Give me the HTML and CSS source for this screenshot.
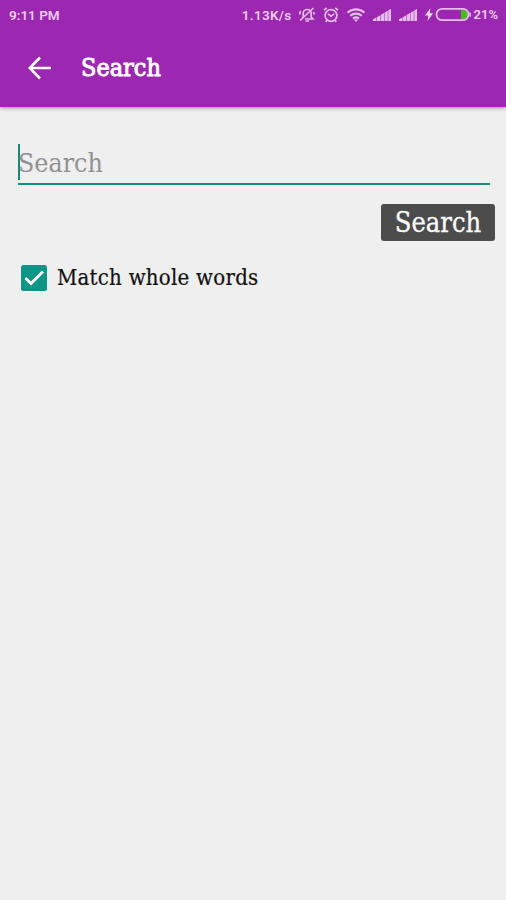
FILE: index.html
```html
<!DOCTYPE html>
<html lang="en">
<head>
  <meta charset="UTF-8" />
  <meta name="viewport" content="width=device-width, initial-scale=1.0"/>
  <title>Search</title>
  <link rel="stylesheet" href="styles.css">
</head>
<body>

  <header class="app-header">
    <div class="status-bar">
      <span class="clock">9:11 PM</span>
      <div class="status-icons">
        <span class="net-speed">1.13K/s</span>
        <!-- muted bell -->
        <svg class="icon-mute" width="18" height="18" viewBox="0 0 18 18">
          <path d="M4 12.5 5.2 11V7.500a4 4 0 0 1 8 0V11l1.700 2H7M7.500 15h3.500M2 14.500 15.500 2M2.500 5 1.600 8.500M15.500 6l.8 2.500"/>
        </svg>
        <!-- alarm clock -->
        <svg class="icon-alarm" width="18" height="18" viewBox="0 0 18 18">
          <circle cx="9" cy="9.500" r="5.900"/>
          <path d="M2 4.200 4.800 2M16 4.200 13.200 2M6 7.800 9 10.300 12 7.800M4.800 14.300 3.800 16M13.200 14.300l1 1.700"/>
        </svg>
        <!-- wifi -->
        <svg class="icon-wifi" width="20" height="16" viewBox="0 0 20 16">
          <path d="M1.500 5.700a12.600 12.600 0 0 1 17 0M4.300 8.800a8.700 8.700 0 0 1 11.400 0M7 11.600a4.800 4.800 0 0 1 6 0"/>
          <path class="dot" d="M7.800 12.600h4.400L10 15Z"/>
        </svg>
        <svg class="icon-signal" width="19" height="14" viewBox="0 0 19 14">
          <path class="wedge" d="M0 13V11.500L18 1V13Z"/>
          <path d="M0 13V11.500L3 9.800V13ZM4 13V9.200L7 7.400V13ZM8 13V6.800L11 5V13ZM12 13V4.500L14.500 3V13ZM15.500 13V2.200L18 1V13Z"/>
        </svg>
        <svg class="icon-signal" width="19" height="14" viewBox="0 0 19 14">
          <path class="wedge" d="M0 13V11.500L18 1V13Z"/>
          <path d="M0 13V11.500L3 9.800V13ZM4 13V9.200L7 7.400V13ZM8 13V6.800L11 5V13ZM12 13V4.500L14.500 3V13ZM15.500 13V2.200L18 1V13Z"/>
        </svg>
        <!-- charging battery -->
        <svg class="icon-battery" width="46" height="15" viewBox="0 0 46 15">
          <path class="bolt" d="M5.500 1 0 8.500H3.300L2.500 14 8 6.300H4.700Z"/>
          <path class="charge" d="M36 3h2.500a4.500 4.500 0 0 1 0 9H36Z"/>
          <rect class="shell" x="11.500" y="1.800" width="32" height="11.400" rx="5.700"/>
          <path class="tip" d="M45 5.500v4"/>
        </svg>
        <span class="battery-level">21%</span>
      </div>
    </div>
    <div class="toolbar">
      <svg class="back" width="24" height="24" viewBox="0 0 24 24">
        <path d="M23 12H2.500M12 1.500 1.800 12 12 22.500"/>
      </svg>
      <h1>Search</h1>
    </div>
  </header>

  <main class="search-form">
    <div class="search-field">
      <span class="caret"></span>
      <span class="placeholder">Search</span>
    </div>
    <button class="search-btn" type="button">Search</button>
    <label class="match-row">
      <svg class="checkbox" width="26" height="26" viewBox="0 0 26 26">
        <rect width="26" height="26" rx="2.500"/>
        <path d="M4.300 13 10 18.500 22 6.600"/>
      </svg>
      <span>Match whole words</span>
    </label>
  </main>

</body>
</html>
```
FILE: styles.css
```css
body {
  margin: 0;
  min-height: 900px;
  background: #efefef;
  font-family: "Roboto Slab", "DejaVu Serif Condensed", "DejaVu Serif", serif;
  font-stretch: condensed;
  color: #111;
}
svg {
  display: block;
  flex: none;
  fill: none;
}
.app-header {
  height: 107px;
  background: #9c27b0;
  box-shadow: 0 1px 4px rgba(0,0,0,0.4);
}
.status-bar {
  display: flex;
  justify-content: space-between;
  align-items: center;
  height: 29px;
  padding: 0 8px 0 9px;
  font-family: Roboto, sans-serif;
  font-stretch: normal;
  font-size: 13.5px;
  font-weight: 600;
  color: #efcdf4;
}
.status-icons {
  display: flex;
  align-items: center;
}
.status-icons svg {
  stroke: #e6bded;
  stroke-width: 1.7;
}
.net-speed {
  letter-spacing: 0.3px;
}
.icon-mute,
.icon-alarm,
.icon-wifi {
  margin-left: 6px;
}
.status-icons .icon-wifi {
  stroke-width: 2.1;
}
.icon-wifi .dot {
  fill: #e6bded;
  stroke: none;
}
.status-icons .icon-signal {
  margin-left: 7px;
  fill: #e6bded;
  stroke: none;
}
.icon-signal .wedge {
  fill-opacity: 0.5;
}
.icon-battery {
  margin-left: 7px;
}
.icon-battery .bolt {
  fill: #f4dcf7;
  stroke: none;
}
.icon-battery .charge {
  fill: #46bd1c;
  stroke: none;
}
.battery-level {
  margin-left: 3px;
  font-size: 13px;
}
.toolbar {
  display: flex;
  align-items: center;
  height: 77px;
  padding-left: 28px;
}
.back {
  stroke: #fff;
  stroke-width: 2.7;
}
.toolbar h1 {
  margin: 0 0 0 29px;
  font-size: 25px;
  line-height: 30px;
  font-weight: normal;
  -webkit-text-stroke: 0.9px #fff;
  color: #fff;
}
.search-form {
  display: flex;
  flex-direction: column;
  padding: 37px 11px 0 18px;
}
.search-field {
  display: flex;
  height: 39px;
  margin-right: 5px;
  border-bottom: 2px solid #168a78;
}
.caret {
  width: 2px;
  height: 36px;
  background: #168a78;
}
.placeholder {
  margin-left: -2px;
  font-size: 26.5px;
  line-height: 38px;
  color: #919191;
}
.search-btn {
  align-self: flex-end;
  width: 114px;
  height: 37px;
  margin-top: 19px;
  padding: 1px 0 0;
  border: none;
  border-radius: 3px;
  background: #4c4c4c;
  font: inherit;
  font-size: 27px;
  line-height: 36px;
  color: #fff;
  -webkit-text-stroke: 0.3px #fff;
}
.match-row {
  display: flex;
  align-items: center;
  margin-top: 24px;
  padding-left: 3px;
  font-size: 22px;
  line-height: 26px;
  letter-spacing: 0.25px;
  -webkit-text-stroke: 0.2px #111;
}
.checkbox {
  margin-right: 10px;
}
.checkbox rect {
  fill: #0d9586;
}
.checkbox path {
  stroke: #fff;
  stroke-width: 2.8;
}
```
